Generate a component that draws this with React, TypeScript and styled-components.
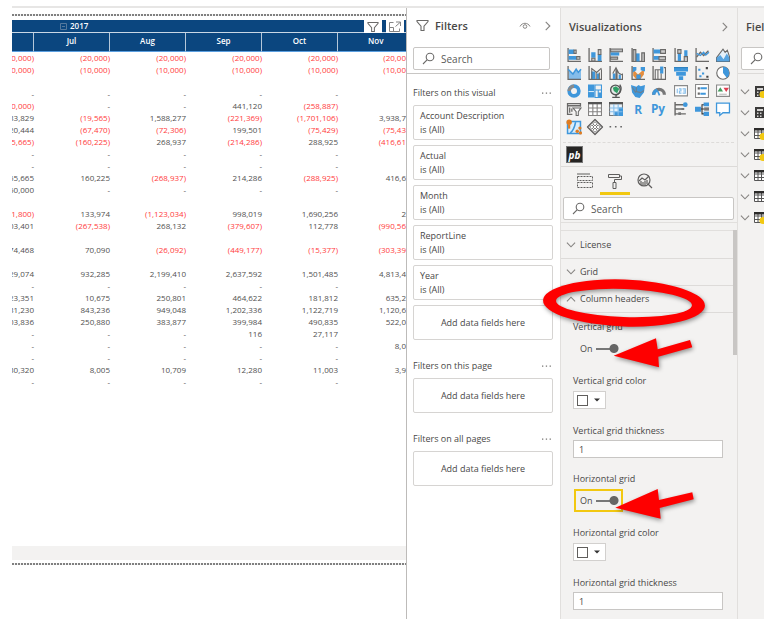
import React from "react";
import styled, { createGlobalStyle, css } from "styled-components";

const GlobalStyle = createGlobalStyle`
  *, *::before, *::after { box-sizing: border-box; }
  body {
    margin: 0;
    background: #fff;
    color: #494847;
    font-family: "Open Sans", "Noto Sans", sans-serif;
    font-size: 9px;
    line-height: 14px;
  }
  button, input { font: inherit; color: inherit; margin: 0; padding: 0; border: 0; background: none; }
  h2, h3, p { margin: 0; font-weight: 400; font-size: inherit; }
  svg { display: block; }
`;

const GREY = "#6a6968";
const BLUE = "#3f97db";
const LIGHT = "#85bdea";
const ORANGE = "#e07b1f";

/* ---------- page ---------- */

const Page = styled.div`
  min-height: 100vh;
  padding: 6px 4px 1px 12px;
  display: flex;
`;

const Workspace = styled.main`
  flex: 1;
  min-width: 0;
  display: grid;
  grid-template-columns: minmax(0, 1fr) 154px 177px 27px;
  border-top: 2px solid #e7e6e5;
`;

/* ---------- report ---------- */

const Report = styled.section`
  display: flex;
  flex-direction: column;
  padding: 6px 0 54px;
  overflow: hidden;
`;

const DottedRule = styled.div`
  height: 2px;
  flex: none;
  background: repeating-linear-gradient(90deg, #808080 0 2px, #f4f4f4 2px 3px);
`;

const Matrix = styled.div`
  position: relative;
  flex: 1;
  margin: 4px 0 0;
  overflow: hidden;
`;

const Ledger = styled.table`
  width: calc(100% + 54px);
  margin-left: -54px;
  border-collapse: separate;
  border-spacing: 0;
  table-layout: fixed;
  font-size: 8px;
  line-height: 12px;
`;

const MonthCol = styled.col`
  width: 76px;
`;

const YearHead = styled.th`
  height: 13px;
  padding: 0 0 0 102px;
  background: #0b467f;
  color: #fff;
  font-weight: 600;
  text-align: left;
  border-bottom: 1px solid #c9d7e5;
`;

const YearLabel = styled.span`
  display: flex;
  align-items: center;
  gap: 3px;
`;

const MonthHead = styled.th`
  height: 19px;
  padding: 0 0 3px;
  background: #0b467f;
  color: #fff;
  font-weight: 600;
  border-right: 1px solid #b5c7d9;
  border-bottom: 1px solid #5b9fe0;
  &:last-child { border-right: 0; padding-right: 0; text-align: left; padding-left: 30px; }
`;

const Cell = styled.td<{ $negative: boolean }>`
  height: 12px;
  padding: 0;
  text-align: right;
  white-space: nowrap;
  color: ${(p) => (p.$negative ? "#ff3b3b" : "#50504f")};
`;

const VisualActions = styled.div`
  position: absolute;
  top: 0;
  right: 2px;
  display: flex;
  gap: 4px;
`;

const VisualAction = styled.button`
  width: 18px;
  height: 13px;
  display: grid;
  place-items: center;
  background: #fff;
`;

const ScrollStrip = styled.div`
  height: 14px;
  flex: none;
  margin-bottom: 3px;
  background: #f3f2f1;
`;

/* ---------- shared panel parts ---------- */

const Panel = styled.aside<{ $shade?: boolean }>`
  position: relative;
  min-width: 0;
  border-left: 1px solid ${(p) => (p.$shade ? "#e1dfdd" : "#bdbbb9")};
  background: ${(p) => (p.$shade ? "#f3f2f1" : "#fff")};
`;

const PanelHeader = styled.header`
  height: 39px;
  display: flex;
  align-items: center;
  padding: 0 6px 2px 8px;
`;

const PanelTitle = styled.h2`
  flex: 1;
  font-size: 11px;
  font-weight: 600;
  white-space: nowrap;
`;

const IconButton = styled.button`
  display: grid;
  place-items: center;
  width: 12px;
  height: 12px;
`;

const SearchBox = styled.label`
  display: flex;
  align-items: center;
  gap: 6px;
  height: 23px;
  padding: 0 8px;
  background: #fff;
  border: 1px solid #c8c6c4;
  border-radius: 2px;
  font-size: 10px;
  svg { flex: none; }
  input { flex: 1; min-width: 0; outline: none; }
  input::placeholder { color: #5a5958; opacity: 1; }
`;

/* ---------- filters ---------- */

const FilterHeader = styled(PanelHeader)`
  gap: 6px;
  padding: 0 6px 4px 9px;
`;

const HeaderActions = styled.div`
  display: flex;
  gap: 11px;
`;

const FilterSearch = styled.div`
  padding: 0 10px 3px 6px;
  border-bottom: 1px solid #c8c6c4;
`;

const FilterGroup = styled.section`
  padding: 0 7px 0 6px;
  & + & { margin-top: 19px; }
  &:first-of-type { margin-top: 12px; }
`;

const GroupTitle = styled.div`
  display: flex;
  justify-content: space-between;
  align-items: center;
  height: 14px;
  margin-bottom: 5px;
  padding-right: 1px;
  white-space: nowrap;
`;

const CardStack = styled.div`
  display: grid;
  gap: 5px;
`;

const FilterCard = styled.article`
  height: 35px;
  padding: 3px 6px;
  border: 1px solid #d6d4d2;
  border-radius: 2px;
  white-space: nowrap;
`;

const DropZone = styled(FilterCard)`
  display: grid;
  place-items: center;
`;

/* ---------- visualizations ---------- */

const Gallery = styled.div`
  display: grid;
  grid-template-columns: repeat(8, 1fr);
  gap: 4px 0;
  justify-items: center;
  margin: 0 3px 0 2px;
  padding: 1px 0 8px;
  border-bottom: 1px dashed #dddbd9;
`;

const GalleryButton = styled.button`
  width: 14px;
  height: 14px;
`;

const CustomVisuals = styled.div`
  padding: 3px 5px;
  border-bottom: 1px solid #dcdad8;
`;

const CustomVisual = styled.button`
  display: block;
  width: 17px;
  height: 17px;
  background: #252423;
  border: 1px solid #777;
  color: #fff;
  font-size: 10px;
  font-weight: 700;
  font-style: italic;
  line-height: 12px;
`;

const Tabs = styled.div`
  display: flex;
  padding: 2px 8px 0 9px;
`;

const Tab = styled.button<{ $active?: boolean }>`
  width: 30px;
  height: 26px;
  display: grid;
  place-items: center;
  border-bottom: 3px solid ${(p) => (p.$active ? "#f2c811" : "transparent")};
`;

const VizSearch = styled.div`
  padding: 2px 3px 2px 2px;
  border-bottom: 1px solid #e1dfdd;
`;

const Properties = styled.div`
  display: flex;
  margin-top: 7px;
`;

const PropertyList = styled.div`
  flex: 1;
  min-width: 0;
  border-top: 1px solid #e1dfdd;
`;

const ScrollThumb = styled.div`
  width: 4px;
  height: 125px;
  background: #c8c6c4;
`;

const Accordion = styled.button`
  display: flex;
  align-items: center;
  gap: 4px;
  width: 100%;
  height: 27px;
  padding: 0 5px;
  border-bottom: 1px solid #dddbd9;
  text-align: left;
  &:first-child { height: 28px; }
`;

const Fields = styled.div`
  padding: 7px 10px 0 12px;
`;

const FieldLabel = styled.label`
  display: block;
  height: 14px;
  white-space: nowrap;
`;

const focusedFrame = css`
  border-color: #f2c811;
`;

const Toggle = styled.label<{ $focused?: boolean }>`
  display: flex;
  align-items: center;
  gap: 3px;
  width: 49px;
  height: 23px;
  margin: 3px 0 14px 1px;
  padding: 0 2px 0 4px;
  border: 2px solid transparent;
  ${(p) => p.$focused && focusedFrame}
`;

const Switch = styled.input`
  appearance: none;
  width: 23px;
  height: 9px;
  background:
    radial-gradient(circle at 18px 50%, #666 4px, transparent 5px),
    linear-gradient(#777, #777) left center / 18px 2px no-repeat;
  &:not(:checked) { transform: rotate(180deg); }
`;

const ColorButton = styled.button`
  display: flex;
  align-items: center;
  gap: 6px;
  width: 33px;
  height: 18px;
  margin: 3px 0 15px;
  padding: 0 3px;
  background: #fff;
  border: 1px solid #d2d0ce;
`;

const Swatch = styled.span`
  width: 11px;
  height: 11px;
  border: 1px solid #605e5c;
  background: #fff;
`;

const NumberBox = styled.input`
  display: block;
  width: 100%;
  height: 18px;
  margin: 2px 0 14px;
  padding: 0 5px;
  background: #fff;
  border: 1px solid #c8c6c4;
  &:last-child { margin-bottom: 0; }
`;

const Markup = styled.svg`
  position: absolute;
  top: 262px;
  left: -21px;
  pointer-events: none;
  filter: drop-shadow(1px 2px 2px rgba(0, 0, 0, 0.4));
`;

/* ---------- field list ---------- */

const FieldsPanel = styled(Panel)`
  overflow: hidden;
`;

const FieldsSearch = styled.div`
  width: 120px;
  padding: 0 0 3px 3px;
  border-bottom: 1px solid #dcdad8;
`;

const TableList = styled.div`
  padding: 7px 0 0 2px;
`;

const TableRow = styled.button`
  display: flex;
  align-items: center;
  gap: 4px;
  height: 21px;
  svg { flex: none; }
`;

/* ---------- small icons ---------- */

const Chevron = ({ dir = "down" }: { dir?: "down" | "up" | "right" }) => {
  const d = { down: "M1 3l4.5 4.500L10 3", up: "M1 8l4.500-4.500L10 8", right: "M3 1l4.500 4.500L3 10" }[dir];
  return (
    <svg width="10" height="10" viewBox="0 0 11 11" fill="none" stroke="#858381" strokeWidth="1.200">
      <path d={d} />
    </svg>
  );
};

const Funnel = ({ size = 13 }: { size?: number }) => (
  <svg width={size} height={size} viewBox="0 0 13 13" fill="none" stroke="#6b6a69" strokeWidth="1.100">
    <path d="M1 1.500h11v1L8 7.200v4.300H5V7.200L1 2.500z" />
  </svg>
);

const Magnifier = () => (
  <svg width="13" height="13" viewBox="0 0 13 13" fill="none" stroke="#6b6a69" strokeWidth="1.100">
    <circle cx="8" cy="5" r="3.800" />
    <path d="M5.300 7.700L1 12" />
  </svg>
);

const Eye = () => (
  <svg width="12" height="10" viewBox="0 0 12 10" fill="none" stroke="#8a8886">
    <path d="M1 5.500C3 1.200 9 1.200 11 5.500" />
    <circle cx="6" cy="5.500" r="1.800" />
  </svg>
);

const Dots = () => (
  <svg width="11" height="4" viewBox="0 0 11 4" fill="#777573">
    <path d="M1 1.500h1.300v1.300H1zM4.800 1.500h1.300v1.300H4.800zM8.600 1.500h1.300v1.300H8.600z" />
  </svg>
);

const Expand = () => (
  <svg width="12" height="11" viewBox="0 0 12 11" fill="none" stroke="#858585">
    <path d="M4.500 1.500h-4v9h10v-3M.5 6.500h4v4M7 1h4.500v4M11 1.500L6.500 5.500" />
  </svg>
);

const Collapse = () => (
  <svg width="7" height="7" viewBox="0 0 7 7" fill="none" stroke="#55789d">
    <path d="M.5.5h6v6h-6zM2 3.500h3" />
  </svg>
);

const Axis = () => <path d="M1 0v12.500H13" fill="none" stroke={GREY} strokeWidth="1.200" />;

/* ---------- gallery drawings ---------- */

const visuals: [string, React.ReactNode][] = [
  ["Stacked bar chart", <><Axis /><path d="M1.500 1.500h5v4h-5zM1.500 7.500h8v3.500h-8z" fill={BLUE} /><path d="M6.500 2h2v3h-2zM9 8h3v2.500H9z" fill="#ccc" stroke={GREY} /></>],
  ["Stacked column chart", <><Axis /><path d="M3 4h4v5H3zM9 6h3.500v6H9z" fill={BLUE} /><path d="M3.500 9.500h3V12h-3zM9.500 1.500h2.500V6H9.500z" fill="#ccc" stroke={GREY} /></>],
  ["Clustered bar chart", <><Axis /><path d="M1.500 4h8v3h-8z" fill={BLUE} /><path d="M1.500 1h11v2.500h-11zM1.500 8.500H8v2H1.500z" fill="#bbb" stroke={GREY} /></>],
  ["Clustered column chart", <><Axis /><path d="M4.500 5H8v7.500H4.500z" fill={BLUE} /><path d="M2 1.500h2.500v11H2zM10 4.500h2.500v8H10z" fill="#bbb" stroke={GREY} /></>],
  ["100% stacked bar chart", <><Axis /><path d="M1.500 1.500h7v3.500h-7zM1.500 7.500h5v3.500h-5z" fill={BLUE} /><path d="M8 1.500h4.500V5H8zM6.500 8h6v3h-6z" fill="#ccc" stroke={GREY} /></>],
  ["100% stacked column chart", <><Axis /><path d="M3.500 5h3v7h-3zM9.500 2h3v6h-3z" fill={BLUE} /><path d="M3.500 1.500h3V5h-3zM9.500 8h3v4.500h-3z" fill="#ccc" stroke={GREY} /></>],
  ["Line chart", <><Axis /><path d="M1.500 8.500L5 4l3 3 4.500-4.500" fill="none" stroke={GREY} strokeWidth="1.200" /><path d="M1.500 5l3.500 2 3-3 2 2.500 3-2.500" fill="none" stroke={BLUE} strokeWidth="1.200" /></>],
  ["Area chart", <><path d="M.5 12.500V9L6.500 1l2 3L10.500 2l2 6v4.500z" fill="#e5f1fa" stroke={GREY} /><path d="M.5 12.500V9L4 6.500l3 4L10 5l2.500 4v3.500z" fill={BLUE} opacity=".85" /></>],
  ["Stacked area chart", <><path d="M1.500 4l4 4L8.500 4l2 3 2.500-3v8.500H1.500z" fill={LIGHT} /><Axis /><path d="M1 3l4.500 4.500L8.500 3l2 3L13 3" fill="none" stroke={BLUE} strokeWidth="1.500" /></>],
  ["Line and stacked column chart", <><Axis /><path d="M3 5h3.500v7H3zM8 7h2.500v5H8z" fill={BLUE} /><path d="M3.500 2v10M7.500 5v7M10.500 6v6M12.500 3v9M3 2l5 4 4.500-4" fill="none" stroke={GREY} /></>],
  ["Line and clustered column chart", <><Axis /><path d="M3.500 7H6v5H3.500zM9 8h2v4H9z" fill={BLUE} /><path d="M3.500 7l3-5.500L9 6.500l3.500 2M7.500 4v8M12.500 7v5M6.500 3v9" fill="none" stroke={GREY} /></>],
  ["Ribbon chart", <><path d="M2 3l4.500 5L12 3v5l-3.500 4.500H5L2 9z" fill={ORANGE} opacity=".85" /><path d="M1.500 1H5v3L1.500 6zM9 1h4v4L9 4zM5 8h4v4.500H5z" fill={BLUE} /><Axis /></>],
  ["Waterfall chart", <><Axis /><path d="M7.500.5h3v6.500h-3z" fill={BLUE} /><path d="M3 3.500h2.500v9H3zM5.500 3.500h2.500M11 1.500h1.500v11H11M8.500 7v5" fill="none" stroke={GREY} /></>],
  ["Funnel chart", <><path d="M0 1h13v4H0zM2 5.500h9V9H2zM4.500 9.500h4v3.500h-4z" fill={BLUE} /><path d="M0 1.500h13" stroke="#2f80bd" /></>],
  ["Scatter chart", <><Axis /><path d="M3 2.500h2v2H3zM6.500 6h2v2h-2zM4 8.500h2v2H4z" fill={BLUE} /><path d="M10 1h2v2h-2zM10.500 9h2v2h-2z" fill="#444" /></>],
  ["Pie chart", <><circle cx="6.500" cy="6.500" r="5.800" fill="#fff" stroke={GREY} /><path d="M6.500.8a5.700 5.700 0 0 1 3.500 10.200L6.500 6.500z" fill={BLUE} /></>],
  ["Donut chart", <><circle cx="6.500" cy="6.500" r="4.500" fill="none" stroke={BLUE} strokeWidth="3.400" /><path d="M6.500 2A4.500 4.500 0 0 0 2 6.500" fill="none" stroke="#8a8a8a" strokeWidth="3" /></>],
  ["Treemap", <><path d="M0 .5h6v12H0zM9.500 8H13v4.500H9.500z" fill={BLUE} /><path d="M6.500 1h6v11.500h-6zM6.500 5.500h6M9.500 5.500v7" fill="none" stroke={BLUE} /><path d="M.5 7h5" stroke="#d7eaf8" /></>],
  ["Map", <><circle cx="6" cy="5.500" r="4.500" fill="#e8e8e8" stroke="#555" strokeWidth="1.300" /><path d="M3.500 3.500l3-1.500 3 2.500-2 4-3-2z" fill="#2f9f64" /><path d="M10 .5a6.500 6.500 0 0 1-3.500 10v2M3 12.500h7" fill="none" stroke="#555" strokeWidth="1.200" /></>],
  ["Filled map", <><path d="M0 1l5 1.500L7 1l2 1 4-1-1 7-4 5-4-1-3-4z" fill={BLUE} /><path d="M5 3v4l4 1 3-2M1 3l3.500 5" fill="none" stroke="#6d7f8e" /></>],
  ["Gauge", <><path d="M1.500 10a5 5 0 0 1 10 0" fill="none" stroke="#777" strokeWidth="3" /><path d="M1.500 10a5 5 0 0 1 3.500-4.500" fill="none" stroke={BLUE} strokeWidth="3" /><path d="M5 6l2 4.500" stroke={BLUE} strokeWidth="1.500" /></>],
  ["Card", <><path d="M.5 1.500h12v9.500H.5z" fill="#fff" stroke="#8a8a8a" /><path d="M3 4.500v4M4.500 4.500h2v2H5v2h2M8 4.500h2.500v4H8M8.500 6.500h2" fill="none" stroke={LIGHT} /></>],
  ["Multi-row card", <><path d="M.5.5h12v12H.5z" fill="#fff" stroke="#8a8a8a" /><path d="M2.500 4h2M2.500 9h2" stroke={GREY} strokeWidth="2" /><path d="M5 4h6M5 9h5" stroke={BLUE} strokeWidth="1.800" /></>],
  ["KPI", <><path d="M.5 1h12v10.500H.5z" fill="#fff" stroke="#8a8a8a" /><path d="M1.500 7L4 3l2.500 4z" fill="#459c5d" /><path d="M7 3.500h5L9.500 7.500z" fill="#df3e50" /><path d="M3 9.500h7" stroke="#bbb" /></>],
  ["Slicer", <><path d="M5 11.500H.5v-10h12v3M.5 3.500h12M2.500 5v5M4.500 6v3" fill="none" stroke={GREY} strokeWidth="1.200" /><path d="M5.500 5.500h7.500L10.500 9v3.500H8.500V9z" fill="#fff" stroke={GREY} /></>],
  ["Table", <><path d="M.5 1.500h12v11H.5zM.5 5.500h12M.5 9h12M4.500 2v10.500M8.500 2v10.500" fill="#fff" stroke="#858382" /><path d="M0 1h13" stroke="#555" strokeWidth="2" /></>],
  ["Matrix", <><path d="M.5 1.500h12v11H.5z" fill="#e9f3fb" stroke="#777" /><path d="M5 9h8v3.500H5zM9 5h4v8H9z" fill={BLUE} /><path d="M.5 5.500h12M.5 9h12M4.500 2v10.500M8.500 2v10.500" stroke={LIGHT} /><path d="M0 1h13" stroke="#555" strokeWidth="2" /></>],
  ["R script visual", <text x="3" y="11" fontSize="11" fontWeight="700" fill={BLUE}>R</text>],
  ["Python visual", <text x="-1" y="10" fontSize="11" fontWeight="700" fill={BLUE}>Py</text>],
  ["Key influencers", <><path d="M1 0v12.500M1 2.500h8.500M1 6.500h7M1 11h10" fill="none" stroke={GREY} strokeWidth="1.300" /><circle cx="10.500" cy="2.500" r="2.200" fill={BLUE} /><path d="M7 5.500h2.500v2H7zM4 9.500h2.500v2.500H4z" fill="#777" /></>],
  ["Decomposition tree", <><path d="M5 6.500h4M6.500 6.500v-4H9M6.500 6.500V11H9" fill="none" stroke="#333" /><path d="M0 4.500h5.500v4.500H0zM8 .5h5v3.500H8zM8 9h5v4H8z" fill={BLUE} /><path d="M8.500 5h4.500v3H8.500z" fill="#777" /></>],
  ["Q&A", <path d="M.5 1h12v9H6.500L3.500 12.500V10h-3z" fill="#fff" stroke={BLUE} strokeWidth="1.200" />],
  ["ArcGIS map", <><path d="M.5 1.500h12v11H.5z" fill="#d9edfc" stroke={BLUE} strokeWidth="1.400" /><path d="M3 12c3-2 4-5 5-10" fill="none" stroke={BLUE} strokeWidth="1.500" /><circle cx="2" cy="2" r="2.500" fill={ORANGE} /><path d="M1 4h2v4H1z" fill={ORANGE} /><circle cx="9.500" cy="10.500" r="1.600" fill={ORANGE} /><circle cx="12" cy="7.500" r="1.500" fill={ORANGE} /><circle cx="12.500" cy="12" r="1.500" fill={ORANGE} /></>],
  ["Power Apps", <g fill="#fff" stroke="#5c5b5a"><path d="M6.500-.5l7 7-7 7-7-7z" strokeWidth="1.100" strokeLinejoin="round" /><path d="M6.500 1.500l2 2-2 2-2-2zM6.500 7.500l2 2-2 2-2-2zM3.500 4.500l2 2-2 2-2-2zM9.500 4.500l2 2-2 2-2-2z" strokeWidth=".8" /></g>],
  ["More visuals", <path d="M.5 5.500h1.500v1.500H.5zM5.500 5.500H7v1.500H5.500zM10.500 5.500H12v1.500h-1.500z" fill="#666" />],
];

/* ---------- data ---------- */

const months = ["", "Jul", "Aug", "Sep", "Oct", "Nov"];

const ledgerRows: string[][] = [
  ["0,000)", "(20,000)", "(20,000)", "(20,000)", "(20,000)", "(20,00"],
  ["0,000)", "(10,000)", "(10,000)", "(10,000)", "(10,000)", "(10,00"],
  [],
  ["-", "-", "-", "-", "-", ""],
  ["0,000)", "-", "-", "441,120", "(258,887)", ""],
  ["33,829", "(19,565)", "1,588,277", "(221,369)", "(1,701,106)", "3,938,7"],
  ["20,444", "(67,470)", "(72,306)", "199,501", "(75,429)", "(75,43"],
  ["5,665)", "(160,225)", "268,937", "(214,286)", "288,925", "(416,61"],
  ["-", "-", "-", "-", "-", ""],
  ["-", "-", "-", "-", "-", ""],
  ["55,665", "160,225", "(268,937)", "214,286", "(288,925)", "416,6"],
  ["50,000", "-", "-", "-", "-", ""],
  [],
  ["1,800)", "133,974", "(1,123,034)", "998,019", "1,690,256", "2"],
  ["03,401", "(267,538)", "268,132", "(379,607)", "112,778", "(990,56"],
  [],
  ["74,468", "70,090", "(26,092)", "(449,177)", "(15,377)", "(303,39"],
  [],
  ["29,074", "932,285", "2,199,410", "2,637,592", "1,501,485", "4,813,4"],
  ["-", "-", "-", "-", "-", ""],
  ["23,351", "10,675", "250,801", "464,622", "181,812", "635,2"],
  ["31,230", "843,236", "949,048", "1,202,336", "1,122,719", "1,120,6"],
  ["03,836", "250,880", "383,877", "399,984", "490,835", "522,0"],
  ["-", "-", "-", "116", "27,117", ""],
  ["-", "-", "-", "-", "-", "8,0"],
  ["-", "-", "-", "-", "-", ""],
  ["30,320", "8,005", "10,709", "12,280", "11,003", "3,9"],
  ["-", "-", "-", "-", "-", ""],
];

const visualFilters = ["Account Description", "Actual", "Month", "ReportLine", "Year"];

const tables: { kind: "calc" | "table"; badge: boolean }[] = [
  { kind: "calc", badge: true },
  { kind: "calc", badge: false },
  { kind: "table", badge: true },
  { kind: "table", badge: true },
  { kind: "table", badge: false },
  { kind: "table", badge: false },
  { kind: "table", badge: true },
];

/* ---------- sections ---------- */

const ReportView = () => (
  <Report>
    <DottedRule />
    <Matrix>
      <Ledger>
        <colgroup>
          {months.slice(1).map((m) => <MonthCol key={m} />)}
          <col />
        </colgroup>
        <thead>
          <tr>
            <YearHead colSpan={6}><YearLabel><Collapse />2017</YearLabel></YearHead>
          </tr>
          <tr>{months.map((m) => <MonthHead key={m}>{m}</MonthHead>)}</tr>
        </thead>
        <tbody>
          {ledgerRows.map((row, r) => (
            <tr key={r}>
              {months.map((m, c) => {
                const value = row[c] ?? "";
                return <Cell key={m} $negative={/[()]/.test(value)}>{value}</Cell>;
              })}
            </tr>
          ))}
        </tbody>
      </Ledger>
      <VisualActions>
        <VisualAction aria-label="Visual filters"><Funnel size={12} /></VisualAction>
        <VisualAction aria-label="Focus mode"><Expand /></VisualAction>
      </VisualActions>
    </Matrix>
    <ScrollStrip />
    <DottedRule />
  </Report>
);

const FilterSection = ({ title, cards = [] }: { title: string; cards?: string[] }) => (
  <FilterGroup>
    <GroupTitle>
      <h3>{title}</h3>
      <IconButton aria-label={`${title} options`}><Dots /></IconButton>
    </GroupTitle>
    <CardStack>
      {cards.map((name) => (
        <FilterCard key={name}>
          <p>{name}</p>
          <p>is (All)</p>
        </FilterCard>
      ))}
      <DropZone>Add data fields here</DropZone>
    </CardStack>
  </FilterGroup>
);

const FiltersPane = () => (
  <Panel>
    <FilterHeader>
      <Funnel />
      <PanelTitle>Filters</PanelTitle>
      <HeaderActions>
        <IconButton aria-label="Show filters"><Eye /></IconButton>
        <IconButton aria-label="Collapse filters"><Chevron dir="right" /></IconButton>
      </HeaderActions>
    </FilterHeader>
    <FilterSearch>
      <SearchBox><Magnifier /><input type="text" placeholder="Search" aria-label="Search filters" /></SearchBox>
    </FilterSearch>
    <FilterSection title="Filters on this visual" cards={visualFilters} />
    <FilterSection title="Filters on this page" />
    <FilterSection title="Filters on all pages" />
  </Panel>
);

const GridSettings = ({ name, focused }: { name: string; focused?: boolean }) => {
  const id = name.toLowerCase();
  return (
    <>
      <FieldLabel htmlFor={`${id}-on`}>{name} grid</FieldLabel>
      <Toggle $focused={focused}>
        On
        <Switch id={`${id}-on`} type="checkbox" defaultChecked />
      </Toggle>
      <FieldLabel htmlFor={`${id}-color`}>{name} grid color</FieldLabel>
      <ColorButton id={`${id}-color`} aria-haspopup="true">
        <Swatch />
        <svg width="6" height="4" viewBox="0 0 6 4" fill="#333"><path d="M0 .5h6L3 3.500z" /></svg>
      </ColorButton>
      <FieldLabel htmlFor={`${id}-width`}>{name} grid thickness</FieldLabel>
      <NumberBox id={`${id}-width`} type="text" inputMode="numeric" defaultValue="1" />
    </>
  );
};

const VisualizationsPane = () => (
  <Panel $shade>
    <PanelHeader>
      <PanelTitle>Visualizations</PanelTitle>
      <IconButton aria-label="Collapse visualizations"><Chevron dir="right" /></IconButton>
    </PanelHeader>
    <Gallery>
      {visuals.map(([name, drawing]) => (
        <GalleryButton key={name} aria-label={name}>
          <svg width="14" height="14" viewBox="0 0 13 13" overflow="visible">{drawing}</svg>
        </GalleryButton>
      ))}
    </Gallery>
    <CustomVisuals><CustomVisual>pb</CustomVisual></CustomVisuals>
    <Tabs>
      <Tab aria-label="Fields">
        <svg width="16" height="16" viewBox="0 0 16 16" fill="none" stroke="#5f5e5d">
          <path d="M0 1h13" />
          <path d="M.5 3.500h15v4H.5zM.5 9.500h15v5H.5z" strokeDasharray="2 1" />
        </svg>
      </Tab>
      <Tab $active aria-label="Format">
        <svg width="16" height="16" viewBox="0 0 16 16" fill="none" stroke="#5f5e5d">
          <path d="M1.500 1.500h11v3h-11zM12.500 3h2v3.500h-7v2.500M6 9.500h3v6H6z" />
        </svg>
      </Tab>
      <Tab aria-label="Analytics">
        <svg width="16" height="16" viewBox="0 0 16 16" fill="none" stroke="#5f5e5d" strokeWidth="1.200">
          <circle cx="7" cy="7" r="6" />
          <path d="M11 11l4 4M4 8v4M6 9v4M8 8v5M10 7v4M2 8l3-3 3 2 4-4" />
        </svg>
      </Tab>
    </Tabs>
    <VizSearch>
      <SearchBox><Magnifier /><input type="text" placeholder="Search" aria-label="Search format options" /></SearchBox>
    </VizSearch>
    <Properties>
      <PropertyList>
        <Accordion aria-expanded={false}><Chevron />License</Accordion>
        <Accordion aria-expanded={false}><Chevron />Grid</Accordion>
        <Accordion aria-expanded><Chevron dir="up" />Column headers</Accordion>
        <Fields>
          <GridSettings name="Vertical" />
          <GridSettings name="Horizontal" focused />
        </Fields>
      </PropertyList>
      <ScrollThumb />
    </Properties>
    <Markup width="170" height="256" viewBox="540 270 170 256" fill="#fe0000" aria-hidden="true">
      <path
        fillRule="evenodd"
        transform="rotate(2 624 303)"
        d="M543 303a81 23.500 0 1 0 162 0a81 23.500 0 1 0-162 0zM556 303a68 14 0 1 0 136 0a68 14 0 1 0-136 0z"
      />
      <path d="M613.700 355.700L656 338.300l1.700 11L690 340l2.300 7.300-34 9.400.700 10.600z" />
      <path d="M615.300 507.700L657.700 489l1.300 11 33.300-7.700 1.400 7-34 8.700 1 10.700z" />
    </Markup>
  </Panel>
);

const FieldIcon = ({ kind, badge }: { kind: "calc" | "table"; badge: boolean }) => (
  <svg width="12" height="13" viewBox="0 0 12 13">
    {kind === "calc" ? (
      <>
        <path d="M1 1h10v11H1z" fill="#3b3a39" />
        <path d="M3 3h6v2H3zM3 6.500h1.500V8H3zM6 6.500h1.500V8H6zM3 9.500h1.500V11H3zM6 9.500h1.500V11H6z" fill="#d5d4d3" />
      </>
    ) : (
      <>
        <path d="M.5 1.500h11v10H.5zM.5 5h11M.5 8.500h11M4 3v8.500M7.500 3v8.500" fill="#fff" stroke="#555" />
        <path d="M0 1h12v2.500H0z" fill="#2c2b2a" />
      </>
    )}
    {badge && <circle cx="9" cy="9.500" r="3.500" fill="#f2c811" />}
  </svg>
);

const FieldsPane = () => (
  <FieldsPanel $shade>
    <PanelHeader><PanelTitle>Fields</PanelTitle></PanelHeader>
    <FieldsSearch>
      <SearchBox><Magnifier /><input type="text" aria-label="Search fields" /></SearchBox>
    </FieldsSearch>
    <TableList>
      {tables.map((t, i) => (
        <TableRow key={i} aria-label={`Table ${i + 1}`}><Chevron /><FieldIcon {...t} /></TableRow>
      ))}
    </TableList>
  </FieldsPanel>
);

export default function App() {
  return (
    <Page>
      <GlobalStyle />
      <Workspace>
        <ReportView />
        <FiltersPane />
        <VisualizationsPane />
        <FieldsPane />
      </Workspace>
    </Page>
  );
}
